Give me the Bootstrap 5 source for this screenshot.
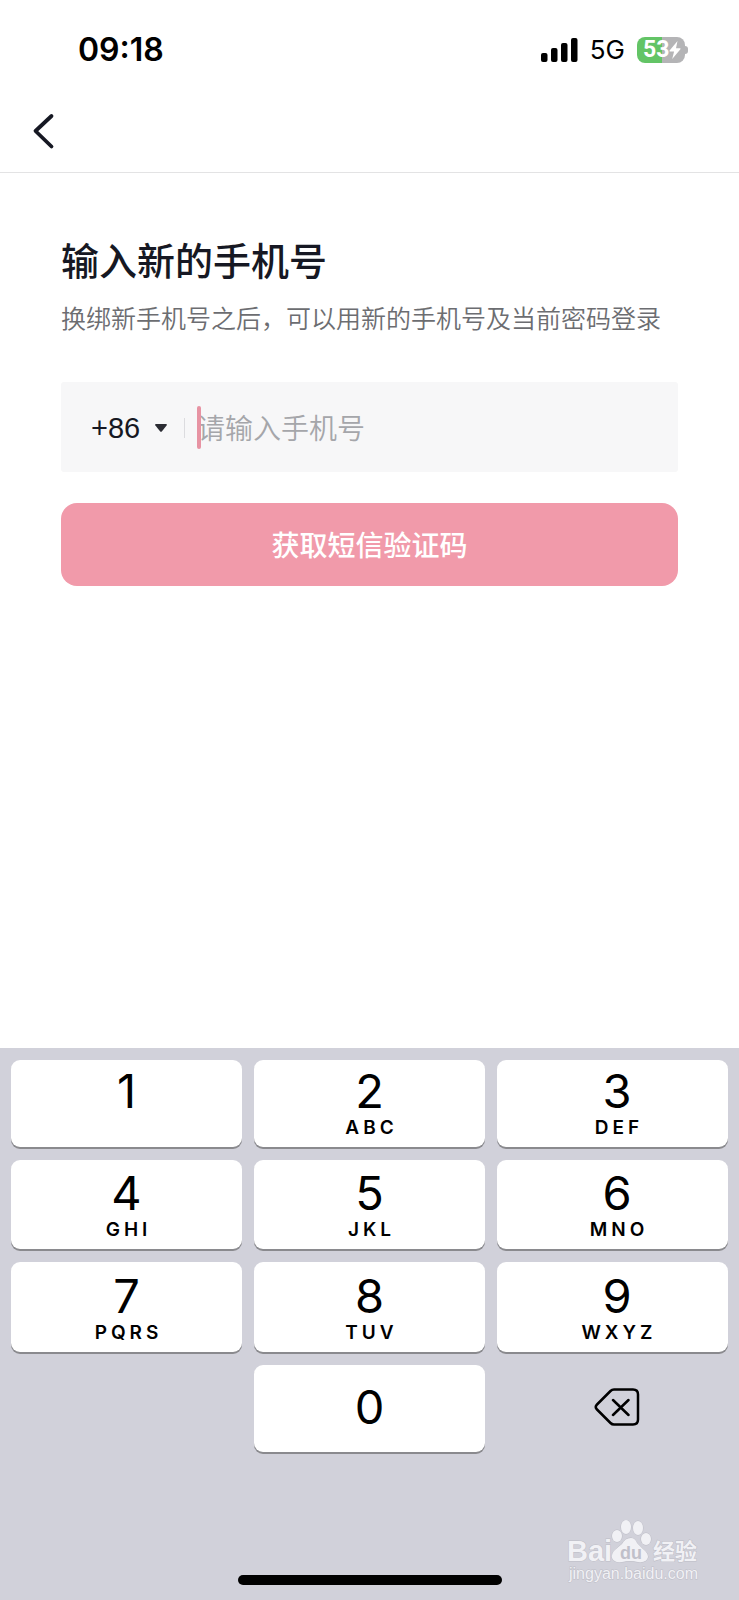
<!DOCTYPE html>
<html lang="zh-CN">
<head>
<meta charset="utf-8">
<meta name="viewport" content="width=device-width, initial-scale=1">
<title>输入新的手机号</title>
<link href="https://cdn.jsdelivr.net/npm/bootstrap@5.3.0/dist/css/bootstrap.min.css" rel="stylesheet">
<style>
  body { font-family: Inter, "Noto Sans CJK SC", sans-serif; color: #161823; background: #fff; }
  .status-bar { height: 89px; padding: 10px 51px 0 78px; color: #000; }
  .clock { font-size: 32px; line-height: 40px; font-weight: 600; }
  .network { font-size: 26px; line-height: 32px; }
  .battery { width: 48px; height: 26px; border-radius: 8px; padding-left: 6px; color: #fff;
    font: 700 23px/28px Roboto, sans-serif; background: linear-gradient(90deg, #63c466 53%, #b4b4b6 53%); }
  .battery-tip { width: 3px; height: 8px; border-radius: 0 4px 4px 0; background: #b4b4b6; }
  .top-nav { height: 84px; padding-left: 30px; border-bottom: 1px solid #e3e3e4; }
  .page-body { padding: 64px 61px 0; }
  .page-title { font-size: 38px; line-height: 48px; font-weight: 500; }
  .page-hint { font-size: 25px; line-height: 34px; margin: 17px 0 46px; font-weight: 350; color: #6c6d71; white-space: nowrap; }
  .phone-field { height: 90px; padding: 2px 30px 0; background: #f7f7f8; border-radius: 3px; }
  .area-code { appearance: none; width: 77px; padding: 0; border: 0; outline: 0; font: 29px/40px "Liberation Sans", sans-serif; color: #161823;
    background: url("data:image/svg+xml,%3Csvg xmlns='http://www.w3.org/2000/svg' viewBox='0 0 14 10'%3E%3Cpath fill='%232b2c33' d='M2 1h10q1.500 0 .6 1.400L8 8.200q-1 1-2 0L1.400 2.400Q.5 1 2 1z'/%3E%3C/svg%3E") no-repeat right center / 14px 10px; }
  .field-rule { width: 1px; height: 20px; margin: 0 12px 0 16px; background: #dcdcdf; }
  .phone-input { font-size: 28px; line-height: 42px; font-weight: 350; color: #161823; }
  .phone-input.form-control { padding: 2px 0 0; }
  .phone-input:focus { box-shadow: none; }
  .phone-input::placeholder { color: #a5a6aa; opacity: 1; }
  .text-cursor { position: absolute; left: 0; top: 0; width: 4px; height: 43px; border-radius: 2px; background: #e793a3; }
  .btn-code { height: 83px; margin-top: 31px; padding: 8px 0 6px; border: 0; border-radius: 16px; background: #f19aaa; color: #fff; font-size: 28px; font-weight: 500; }
  .btn-code:hover { background: #ee8c9f; color: #fff; }
  .keyboard { height: 552px; padding: 12px 11px 0; background: #d1d1da; }
  .key-grid { display: grid; grid-template-columns: repeat(3, 1fr); grid-template-rows: 87px 89px 90px 87px; gap: 13px 12px; }
  .num-key { border: 0; border-radius: 9px; background: #fff; color: #000; padding: 0 0 8px; box-shadow: 0 2px 0 #8a8a8e;
    display: flex; flex-direction: column; align-items: center; justify-content: flex-end; }
  .key-grid > :nth-child(3n) { padding-left: 9px; }
  .digit { font-size: 47px; line-height: 48px; }
  .letters { font-size: 19px; line-height: 22px; height: 22px; margin-top: 2px; padding-left: 4px; font-weight: 600; letter-spacing: 4px; }
  .key-plain { border: 0; background: none; padding: 0 0 3px; }
  .home-bar { position: absolute; left: 50%; bottom: 15px; width: 264px; height: 10px; margin-left: -132px; border-radius: 5px; background: #000; }
  .watermark { position: absolute; right: 36px; bottom: 14px; }
</style>
</head>
<body>
<div class="d-flex flex-column min-vh-100">
  <header>
    <div class="status-bar d-flex align-items-center justify-content-between">
      <div class="clock">09:18</div>
      <div class="d-flex align-items-center">
        <svg width="37" height="24" viewBox="0 0 37 24" aria-hidden="true"><rect y="15" width="6.500" height="9" rx="2"/><rect x="10" y="10" width="6.500" height="14" rx="2"/><rect x="20" y="5" width="6.500" height="19" rx="2"/><rect x="30" width="6.500" height="24" rx="2"/></svg>
        <div class="network ms-2 me-2 px-1">5G</div>
        <div class="battery d-flex align-items-center">53<svg width="12" height="18" viewBox="0 0 12 18" aria-hidden="true"><path fill="#fff" d="M8.500 0 .6 9.600q-.6 1 .5 1h4L3.200 18l8.200-9.700q.6-1-.5-1H7z"/></svg></div>
        <div class="battery-tip ms-auto"></div>
      </div>
    </div>
    <nav class="top-nav d-flex align-items-center">
      <button type="button" class="btn p-0 border-0 d-flex" aria-label="返回">
        <svg width="28" height="38" viewBox="0 0 28 38" fill="none" stroke="#161823" stroke-width="3.800" stroke-linecap="round" stroke-linejoin="round"><path d="M21.500 4 5.500 19l16 15.500"/></svg>
      </button>
    </nav>
  </header>

  <main class="page-body flex-grow-1">
    <h1 class="page-title mb-0">输入新的手机号</h1>
    <p class="page-hint">换绑新手机号之后，可以用新的手机号及当前密码登录</p>
    <form>
      <div class="phone-field d-flex align-items-center">
        <select class="area-code" aria-label="国家或地区代码"><option>+86</option></select>
        <span class="field-rule"></span>
        <div class="position-relative flex-grow-1">
          <input type="tel" class="phone-input form-control border-0 bg-transparent" placeholder="请输入手机号" aria-label="手机号">
          <span class="text-cursor"></span>
        </div>
      </div>
      <button type="button" class="btn btn-code w-100">获取短信验证码</button>
    </form>
  </main>

  <section class="keyboard position-relative" aria-label="数字键盘">
    <div class="key-grid">
      <button type="button" class="num-key"><span class="digit">1</span><span class="letters"></span></button>
      <button type="button" class="num-key"><span class="digit">2</span><span class="letters">ABC</span></button>
      <button type="button" class="num-key"><span class="digit">3</span><span class="letters">DEF</span></button>
      <button type="button" class="num-key"><span class="digit">4</span><span class="letters">GHI</span></button>
      <button type="button" class="num-key"><span class="digit">5</span><span class="letters">JKL</span></button>
      <button type="button" class="num-key"><span class="digit">6</span><span class="letters">MNO</span></button>
      <button type="button" class="num-key"><span class="digit">7</span><span class="letters">PQRS</span></button>
      <button type="button" class="num-key"><span class="digit">8</span><span class="letters">TUV</span></button>
      <button type="button" class="num-key"><span class="digit">9</span><span class="letters">WXYZ</span></button>
      <span></span>
      <button type="button" class="num-key justify-content-center pb-1"><span class="digit">0</span></button>
      <button type="button" class="key-plain d-flex align-items-center justify-content-center" aria-label="删除">
        <svg width="46" height="38" viewBox="0 0 46 38" fill="none" stroke="#000" stroke-width="2.500" stroke-linecap="round" stroke-linejoin="round"><path d="M20 1.500h19q5 0 5 5v25q0 5-5 5H20q-2 0-3.500-1.500L3 21.500q-2.500-2.500 0-5L16.500 3Q18 1.500 20 1.500zM19 12l15.500 15M34.500 12 19 27"/></svg>
      </button>
    </div>
    <svg class="watermark" width="136" height="66" viewBox="0 0 136 66" role="img" aria-label="百度经验">
      <g fill="#f1f1f5" stroke="#bdbdc6" stroke-width="1" paint-order="stroke">
        <text x="0" y="41" font-family="Liberation Sans, sans-serif" font-weight="700" font-size="29">Bai</text>
        <ellipse cx="50" cy="16" rx="5" ry="6"/>
        <ellipse cx="59" cy="7" rx="5" ry="7"/>
        <ellipse cx="71" cy="8" rx="5" ry="7"/>
        <ellipse cx="79" cy="19" rx="5" ry="6"/>
        <path d="M64 18q-6 0-9 6l-6 5q-5 4-4 9 2 5 10 4 8-2 16 0 9 1 10-5 0-4-5-8l-6-6q-2-5-6-5z"/>
        <text x="86" y="39" font-family="Noto Sans CJK SC, sans-serif" font-weight="700" font-size="22">经验</text>
      </g>
      <text x="53" y="39" fill="#c0c0ca" font-family="Liberation Sans, sans-serif" font-weight="700" font-size="18">du</text>
      <text x="2" y="59" fill="#f1f1f5" stroke="#bdbdc6" stroke-width="1" paint-order="stroke" font-family="Liberation Sans, sans-serif" font-size="16">jingyan.baidu.com</text>
    </svg>
    <div class="home-bar"></div>
  </section>
</div>
<script src="https://cdn.jsdelivr.net/npm/bootstrap@5.3.0/dist/js/bootstrap.bundle.min.js"></script>
</body>
</html>
